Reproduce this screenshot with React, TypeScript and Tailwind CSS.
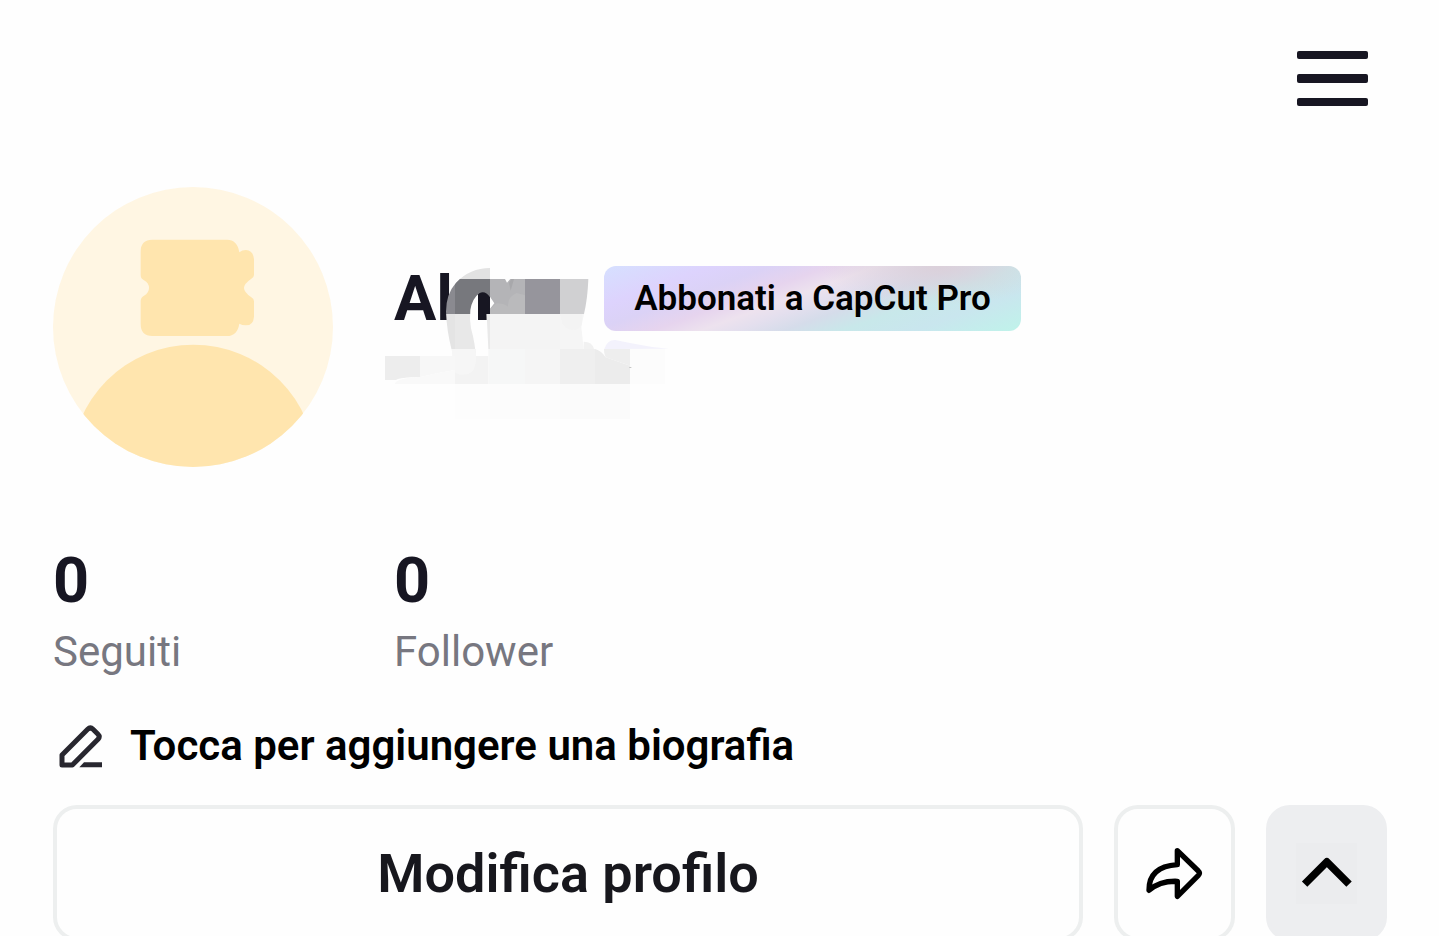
import type { ReactNode } from "react";
import { clsx } from "clsx";

interface Stat {
    label: string;
    value: number;
}

const STATS: Stat[] = [
    { label: "Seguiti", value: 0 },
    { label: "Follower", value: 0 },
];

function MenuIcon() {
    return (
        <svg viewBox="0 0 71 55" className="w-[71px] h-[55px]" fill="#171622" aria-hidden="true">
            <rect x="0" y="0" width="71" height="8" rx="2" />
            <rect x="0" y="23" width="71" height="9" rx="2" />
            <rect x="0" y="47" width="71" height="8" rx="2" />
        </svg>
    );
}

function Avatar() {
    return (
        <svg viewBox="39 50 840 840" className="w-[280px] h-[280px] shrink-0" role="img" aria-label="Avatar">
            <defs>
                <clipPath id="avatar-clip">
                    <circle cx="459" cy="470" r="420" />
                </clipPath>
            </defs>
            <g clipPath="url(#avatar-clip)">
                <rect x="39" y="50" width="840" height="840" fill="#fff6e3" />
                <circle cx="460" cy="890" r="367" fill="#ffe5ae" />
            </g>
            <path
                fill="#ffe5ae"
                d="M337 208H561Q592 208 598 246Q606 239 618 239Q640 241 642 267V314Q642 321 634 325Q612 340 612 353Q612 366 634 381Q642 386 642 393V439Q640 465 618 465Q606 465 598 460Q592 497 561 497H337Q302 497 302 461V392Q302 381 312 376Q327 368 327 353Q327 338 312 330Q302 325 302 314V244Q302 208 337 208Z"
            />
        </svg>
    );
}

// Mosaic strokes that hide the user name and the handle below it
function NameMask() {
    return (
        <svg
            viewBox="0 0 960 540"
            className="absolute -left-6 -top-4 w-[320px] h-[180px] pointer-events-none"
            aria-hidden="true"
        >
            <defs>
                <clipPath id="mask-arch">
                    <path d="M360 54Q300 54 258 98Q228 132 228 185Q230 240 245 300V350L270 378Q318 370 319 335Q316 280 303 235Q298 205 301 180Q307 145 328 130Q345 120 360 142Z" />
                </clipPath>
            </defs>
            <path d="M300 128H324V212H300Z" fill="#fefefe" />
            <path d="M330 124H360V192H350V210H330Z" fill="#171622" />
            <g clipPath="url(#mask-arch)">
                <rect x="220" y="50" width="140" height="37" fill="#e2e2e2" />
                <rect x="220" y="87" width="35" height="105" fill="#8a8a90" />
                <rect x="255" y="87" width="105" height="105" fill="#77787d" />
                <rect x="220" y="192" width="35" height="105" fill="#e4e4e4" />
                <rect x="255" y="192" width="105" height="105" fill="#e8e8e8" />
            </g>
            <path d="M360 87H405L411 98L421 87H465V192H360V176L373 160L360 140Z" fill="#b4b4b7" />
            <path d="M417 98L424 87H432L422 122Z" fill="#a8a8ab" />
            <path d="M360 192V178L380 160Q400 160 414 170Q412 140 440 129L465 136V192Z" fill="#bababc" />
            <rect x="465" y="87" width="105" height="105" fill="#96959c" />
            <path d="M570 87H655Q653 145 642 192H570Z" fill="#d0d0d2" />
            <path d="M350 192H360V297H355Z" fill="#e9e9e9" />
            <rect x="360" y="192" width="210" height="105" fill="#f4f4f4" />
            <path d="M570 192H642L634 230L641 297H570Z" fill="#f5f5f5" />
            <path d="M577 220Q590 240 607 240Q630 240 636 222V192H570Z" fill="#f3f3f3" />
            <path d="M641 275Q667 275 672 297H641Z" fill="#f1f1f1" />
            <path d="M45 318H150V381Q90 382 78 390H45Z" fill="#ededed" />
            <path d="M150 318H255V360Q205 368 150 381Z" fill="#f7f7f7" />
            <path d="M75 400Q85 383 150 381Q205 368 255 360V402H75Z" fill="#f9f9f9" />
            <path d="M245 297H318V318H355V402H255V318H248Z" fill="#f3f3f3" />
            <path d="M245 297H317Q322 350 305 366Q285 382 255 368V318H248Z" fill="#f6f6f6" />
            <rect x="355" y="297" width="110" height="105" fill="#f6f7f7" />
            <rect x="465" y="297" width="105" height="105" fill="#f5f5f5" />
            <rect x="570" y="297" width="105" height="105" fill="#efefef" />
            <path d="M675 297Q695 303 707 322L780 347V402H675Z" fill="#ececec" />
            <path d="M707 322Q701 310 702 297H780V347Z" fill="#eeeeee" />
            <rect x="780" y="297" width="105" height="105" fill="#fcfcfc" />
            <rect x="778" y="351" width="6" height="2" fill="#aaaaaa" />
            <path d="M703 297Q712 269 736 270L780 279Q840 292 897 296Z" fill="#f3f2fc" />
            <rect x="255" y="402" width="105" height="105" fill="#fdfdfd" />
            <rect x="360" y="402" width="210" height="105" fill="#fcfcfc" />
            <rect x="570" y="402" width="210" height="105" fill="#fbfbfb" />
        </svg>
    );
}

function PencilIcon() {
    return (
        <svg
            viewBox="55 38 138 138"
            className="w-[46px] h-[46px] shrink-0"
            fill="none"
            stroke="#28272f"
            strokeWidth="15"
            strokeLinejoin="round"
            aria-hidden="true"
        >
            <path d="M67 164V134L144 57Q152 49 160 57L175 72Q182 79 175 87L98 164Z" />
            <path d="M119 171L133 156H187V171Z" fill="#28272f" stroke="none" />
        </svg>
    );
}

function ShareIcon() {
    return (
        <svg
            viewBox="162 168 180 165"
            className="w-[60px] h-[55px]"
            fill="none"
            stroke="#000"
            strokeWidth="16"
            strokeLinejoin="round"
            aria-hidden="true"
        >
            <path d="M259 182L322 243Q329 249 322 256L259 319V274Q207 272 174 301Q173 230 259 224Z" />
        </svg>
    );
}

function ChevronIcon() {
    return (
        <svg viewBox="617 162 184 184" className="w-[61px] h-[61px] bg-[#ebecee]" fill="none" aria-hidden="true">
            <path d="M643 286L710 219L777 286" stroke="#000" strokeWidth="23" strokeLinejoin="round" />
        </svg>
    );
}

function ActionButton({ label, filled, children }: { label: string; filled?: boolean; children: ReactNode }) {
    return (
        <button
            type="button"
            aria-label={label}
            className={clsx(
                "w-[121px] shrink-0 flex items-center justify-center rounded-3xl border-4",
                filled ? "bg-[#edeef0] border-[#edeef0]" : "border-[#edefef]"
            )}
        >
            {children}
        </button>
    );
}

export default function App() {
    return (
        <main className="bg-[#fefefe] pl-[53px] pr-[52px] font-['Roboto',sans-serif] text-[#171622]">
            <header className="flex justify-end pt-[51px] pr-[19px]">
                <button type="button" aria-label="Menu">
                    <MenuIcon />
                </button>
            </header>

            <section className="flex items-start mt-[81px] gap-[61px]">
                <Avatar />
                <div className="flex items-center pt-[79px]">
                    <div className="relative w-[210px] h-[65px]">
                        <h1 className="text-[63px] leading-[65px] font-bold">Aln</h1>
                        <NameMask />
                    </div>
                    <button
                        type="button"
                        className="relative w-[417px] h-[65px] rounded-xl text-[35px] leading-[65px] font-semibold text-black whitespace-nowrap bg-[radial-gradient(28%_60%_at_80%_0%,#dbd0da_0%,#dbd0da00_100%),linear-gradient(160deg,#d6e0ff_0%,#ddd3fd_18%,#dbd2f6_28%,#e6d4ee_38%,#ede2ee_46%,#e4dfee_52%,#d5dcea_60%,#c8e8ea_70%,#c9e6ee_82%,#bff3ea_100%)]"
                    >
                        Abbonati a CapCut Pro
                    </button>
                </div>
            </section>

            <dl className="flex mt-[78px]">
                {STATS.map((stat) => (
                    <div key={stat.label} className="w-[341px] flex flex-col-reverse gap-2">
                        <dt className="text-[42px] leading-[54px] text-[#777780]">{stat.label}</dt>
                        <dd className="text-[63px] leading-[72px] font-bold">{stat.value}</dd>
                    </div>
                ))}
            </dl>

            <button type="button" className="flex items-center gap-[26px] mt-[39px] pl-[5px] text-black">
                <PencilIcon />
                <span className="text-[42px] leading-[56px] font-semibold">Tocca per aggiungere una biografia</span>
            </button>

            <div className="flex mt-[31px] gap-[31px] h-[136px]">
                <button
                    type="button"
                    className="flex-1 rounded-3xl border-4 border-[#edefef] text-[54px] font-semibold text-[#17171d]"
                >
                    Modifica profilo
                </button>
                <ActionButton label="Condividi">
                    <ShareIcon />
                </ActionButton>
                <ActionButton label="Mostra suggerimenti" filled>
                    <ChevronIcon />
                </ActionButton>
            </div>
        </main>
    );
}
